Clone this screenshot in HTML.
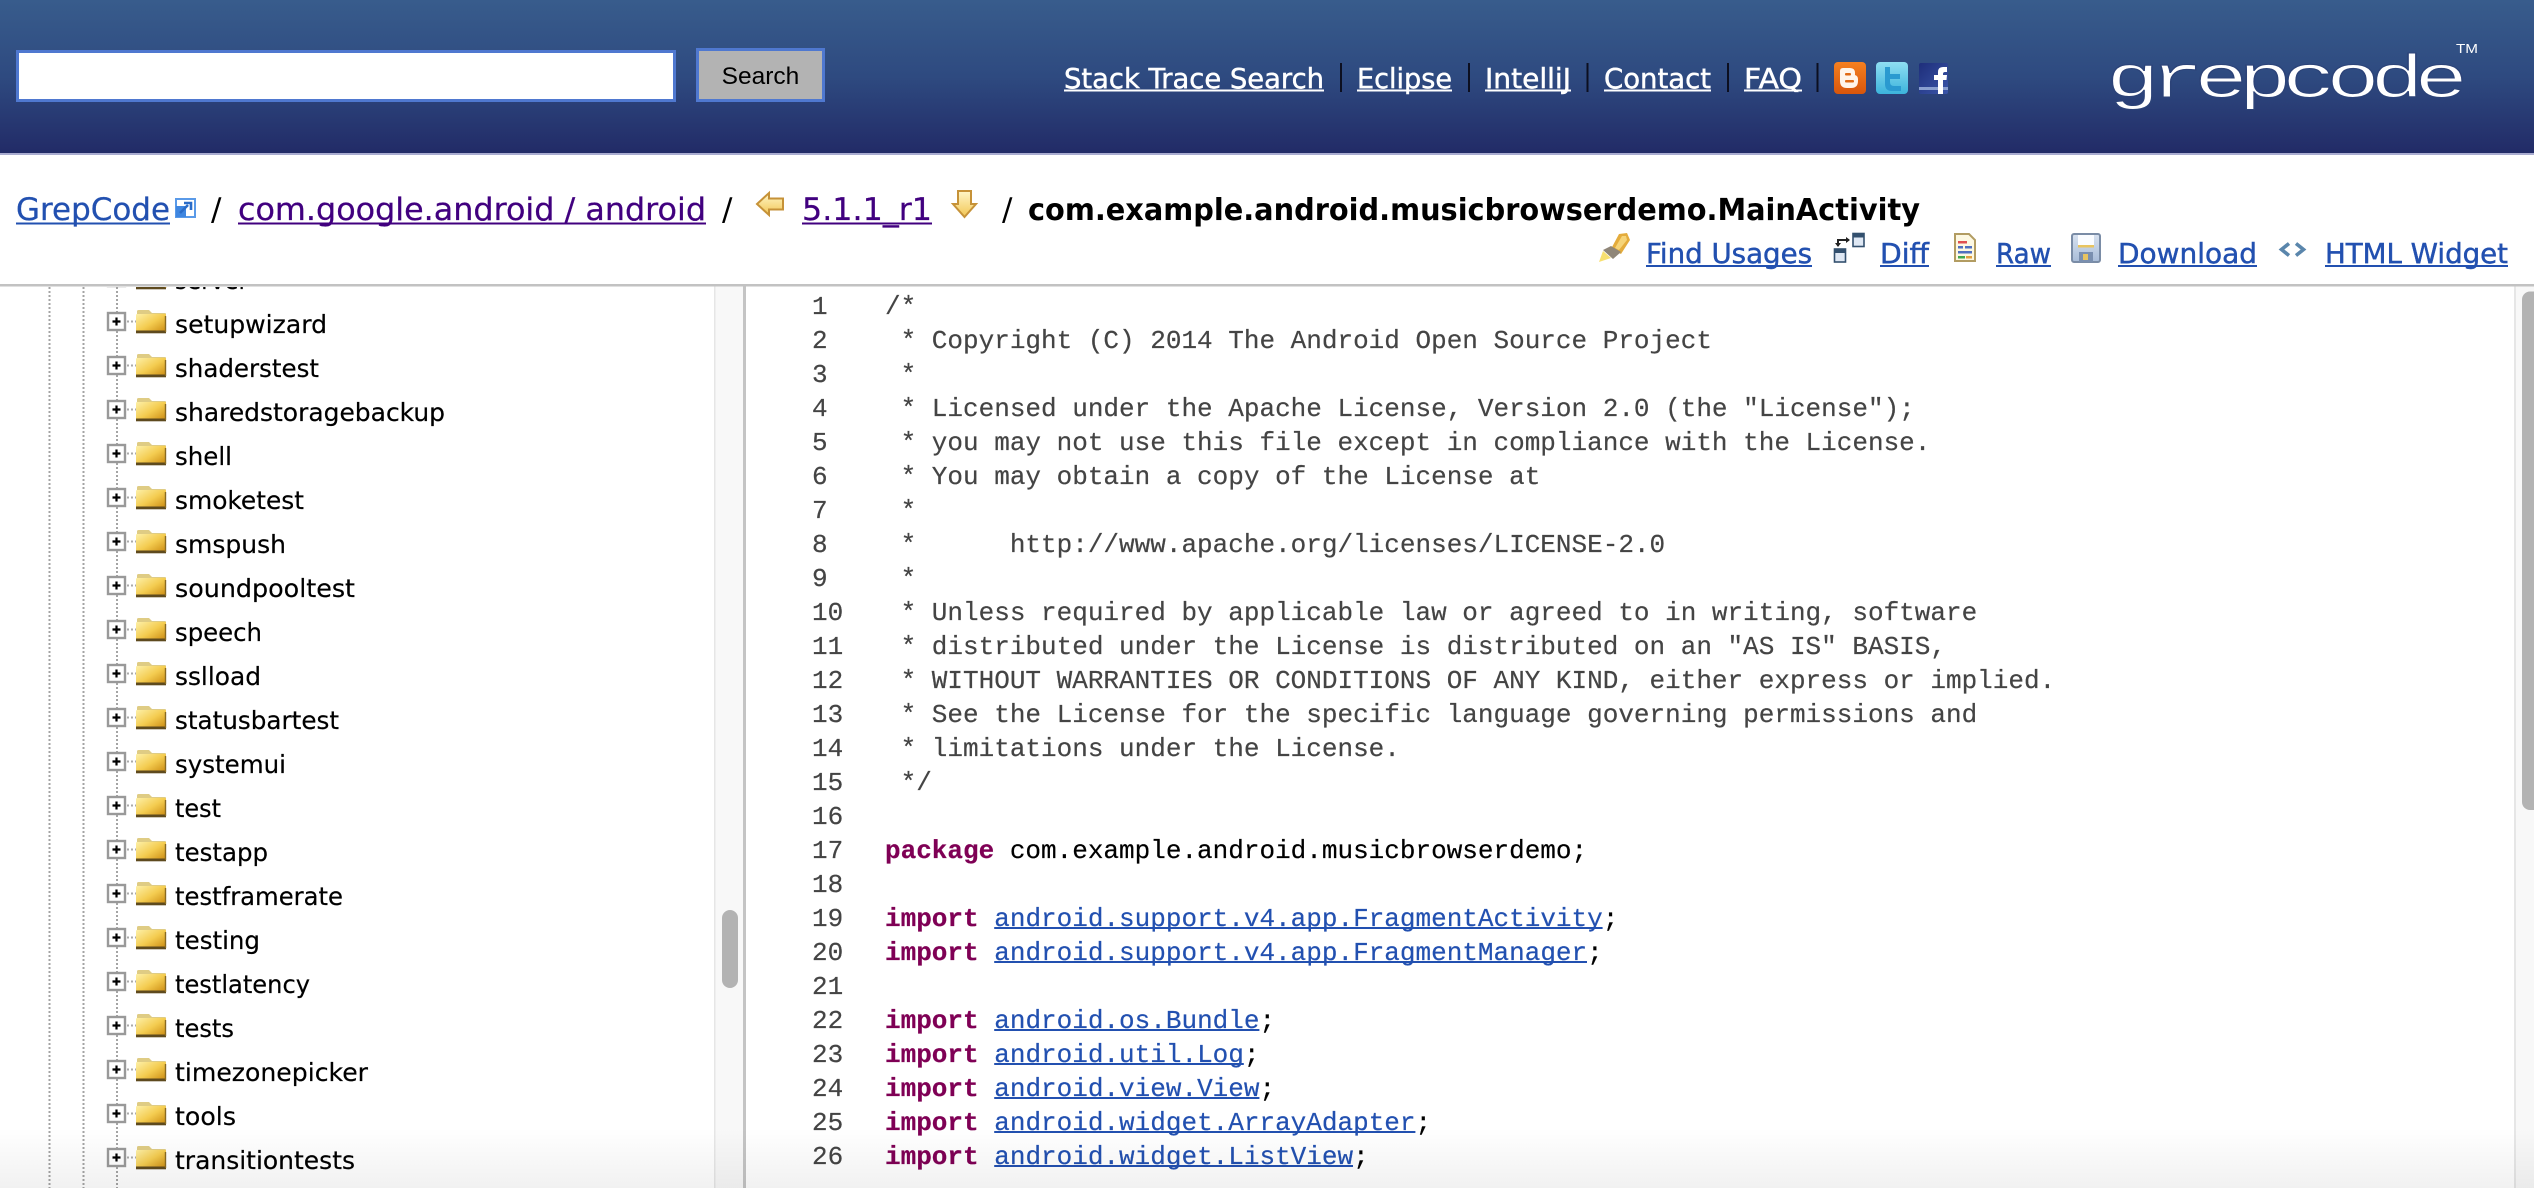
<!DOCTYPE html>
<html lang="en">
<head>
<meta charset="utf-8">
<title>com.example.android.musicbrowserdemo.MainActivity - GrepCode</title>
<style>
html,body{margin:0;padding:0;width:2534px;height:1188px;overflow:hidden;background:#fff}
#q{position:absolute;left:16px;top:50px;width:660px;height:52px;box-sizing:border-box;border:3px solid #4f78d0;background:#fff;margin:0;padding:0;outline:none}
#go{position:absolute;left:696px;top:48px;width:129px;height:54px;box-sizing:border-box;border:3px solid #4f78d0;background:#b3b3b3;color:#000;font:24.5px "Liberation Sans",sans-serif;margin:0;padding:3px 0 0}
svg{position:absolute;left:0;top:0}
.n{font:27.4px "DejaVu Sans",sans-serif}
.n text{stroke-width:.45}
.b{font:31px "DejaVu Sans",sans-serif}
.t{font:25px "DejaVu Sans",sans-serif;fill:#000;stroke:#000;stroke-width:.2}
.c{font:26px "Liberation Mono",monospace;white-space:pre;fill:#000;stroke:#000;stroke-width:.2}
.g{fill:#444;stroke:#444}
.ln{font:26px "Liberation Mono",monospace;fill:#444;stroke:#444;stroke-width:.2}
.k{font-weight:bold;fill:#7f0055;stroke:#7f0055}
.l{fill:#2250b0;stroke:#2250b0}
</style>
</head>
<body>
<svg width="2534" height="1188" viewBox="0 0 2534 1188" xmlns="http://www.w3.org/2000/svg">
<defs>
<linearGradient id="hd" x1="0" y1="0" x2="0" y2="1"><stop offset="0" stop-color="#385c8c"/><stop offset=".5" stop-color="#2e4a80"/><stop offset="1" stop-color="#222b67"/></linearGradient>
<linearGradient id="fo" x1="0" y1="0" x2="1" y2="1"><stop offset="0" stop-color="#fdf0a8"/><stop offset=".5" stop-color="#f4cc50"/><stop offset="1" stop-color="#c8860c"/></linearGradient>
<linearGradient id="ar" x1="0" y1="0" x2="0" y2="1"><stop offset="0" stop-color="#fff6c8"/><stop offset="1" stop-color="#f2c654"/></linearGradient>
<linearGradient id="bl" x1="0" y1="0" x2="0" y2="1"><stop offset="0" stop-color="#f58020"/><stop offset="1" stop-color="#d8560c"/></linearGradient>
<linearGradient id="tw" x1="0" y1="0" x2="0" y2="1"><stop offset="0" stop-color="#8fdef2"/><stop offset="1" stop-color="#3cb4dc"/></linearGradient>
<linearGradient id="fb" x1="0" y1="0" x2="1" y2="1"><stop offset="0" stop-color="#1e2e7a"/><stop offset="1" stop-color="#3a55a8"/></linearGradient>
<linearGradient id="sv" x1="0" y1="0" x2="0" y2="1"><stop offset="0" stop-color="#d8e2f0"/><stop offset="1" stop-color="#a8bcd8"/></linearGradient>
<linearGradient id="fade" x1="0" y1="0" x2="0" y2="1"><stop offset="0" stop-color="#000" stop-opacity="0"/><stop offset="1" stop-color="#000" stop-opacity=".055"/></linearGradient>
<clipPath id="tc"><rect x="0" y="287" width="714" height="901"/></clipPath>
<symbol id="ti" overflow="visible" viewBox="0 0 80 30" width="80" height="30">
<rect x="1" y="3" width="17" height="17" fill="#fff" stroke="#999" stroke-width="2.4"/>
<path d="M5.500 11.500h8M9.500 7.500v8" stroke="#000" stroke-width="2.200" fill="none"/>
<path d="M20 11.500h9" stroke="#aaa" stroke-width="2" stroke-dasharray="2 2" fill="none"/>
<path d="M30 4 V1.500 Q30 0 31.500 0 H42 L45 3 H58 Q59 3 59 4 V23 H30 Z" fill="#dfcc84"/>
<rect x="29" y="4" width="30" height="19" rx="1" fill="url(#fo)"/>
<rect x="29" y="20.500" width="30" height="2.800" fill="#5e4a1e"/>
<rect x="57.800" y="6" width="1.400" height="16" fill="#8a6a20"/>
</symbol>
</defs>

<!-- header -->
<rect x="0" y="0" width="2534" height="153" fill="url(#hd)"/>
<rect x="0" y="153" width="2534" height="2" fill="#a9acd0"/>

<!-- nav -->
<g class="n" fill="#fff" stroke="#fff">
<text x="1064" y="88" textLength="260" lengthAdjust="spacingAndGlyphs">Stack Trace Search</text><rect x="1064" y="89.500" width="260" height="2" stroke="none"/>
<text x="1357" y="88" textLength="95" lengthAdjust="spacingAndGlyphs">Eclipse</text><rect x="1357" y="89.500" width="95" height="2" stroke="none"/>
<text x="1485" y="88" textLength="86" lengthAdjust="spacingAndGlyphs">IntelliJ</text><rect x="1485" y="89.500" width="86" height="2" stroke="none"/>
<text x="1604" y="88" textLength="107" lengthAdjust="spacingAndGlyphs">Contact</text><rect x="1604" y="89.500" width="107" height="2" stroke="none"/>
<text x="1744" y="88" textLength="58" lengthAdjust="spacingAndGlyphs">FAQ</text><rect x="1744" y="89.500" width="58" height="2" stroke="none"/>
</g>
<g fill="#0c0f20">
<rect x="1340" y="63" width="2" height="29"/><rect x="1468" y="63" width="2" height="29"/><rect x="1586.500" y="63" width="2" height="29"/><rect x="1727" y="63" width="2" height="29"/><rect x="1816.500" y="63" width="2" height="29"/>
</g>
<!-- social -->
<rect x="1834" y="62" width="32" height="32" rx="4" fill="url(#bl)"/>
<path d="M1843 68h7q5 0 5 5v2q3 1 3 4v2q0 7-7 7h-4q-7 0-7-7v-10q0-3 3-3z" fill="#fff5ea"/>
<rect x="1845" y="73" width="6" height="2.500" rx="1" fill="#e06a14"/><rect x="1845" y="80" width="9" height="2.500" rx="1" fill="#e06a14"/>
<rect x="1876" y="62" width="32" height="32" rx="4" fill="url(#tw)"/>
<path d="M1885 67h5v7h10v5h-10v3q0 4 4 4h7v5h-9q-7 0-7-7z" fill="#2a9ad0"/>
<rect x="1919" y="63" width="29" height="31" rx="2" fill="url(#fb)"/>
<rect x="1919" y="87" width="29" height="3" fill="#8a9fd0"/>
<path d="M1938 94V80h-4v-5h4v-3q0-5 5-5h4v5h-2q-2 0-2 2v1h4l-.5 5H1943v14z" fill="#fff"/>

<!-- logo -->
<g transform="translate(2106,97) scale(1.22,.82)">
<text x="0" y="0" font-family="Liberation Mono, monospace" font-size="73.500" letter-spacing="-8" fill="#fff" stroke="#2c4378" stroke-width="1.300">grepcode</text>
</g>
<text x="2456" y="53" font-family="Liberation Sans, sans-serif" font-size="12.500" fill="#fff" textLength="22" lengthAdjust="spacingAndGlyphs">TM</text>

<!-- breadcrumb -->
<g class="b">
<text x="16" y="220" fill="#2250b0" stroke="#2250b0" stroke-width=".25" textLength="154" lengthAdjust="spacingAndGlyphs">GrepCode</text><rect x="16" y="222.500" width="154" height="2" fill="#2250b0"/>
<text x="211" y="220" fill="#000">/</text>
<text x="238" y="220" fill="#41007f" stroke="#41007f" stroke-width=".25" textLength="468" lengthAdjust="spacingAndGlyphs">com.google.android / android</text><rect x="238" y="222.500" width="468" height="2" fill="#41007f"/>
<text x="722" y="220" fill="#000">/</text>
<text x="802" y="220" fill="#41007f" stroke="#41007f" stroke-width=".25" textLength="130" lengthAdjust="spacingAndGlyphs">5.1.1_r1</text><rect x="802" y="222.500" width="130" height="2" fill="#41007f"/>
<text x="1002" y="220" fill="#000">/</text>
<text x="1028" y="220" fill="#000" font-weight="bold" font-size="30" textLength="892" lengthAdjust="spacingAndGlyphs">com.example.android.musicbrowserdemo.MainActivity</text>
</g>
<!-- external icon -->
<rect x="176" y="199" width="19" height="18" fill="#fff" stroke="#5a9ae8" stroke-width="2"/>
<rect x="176" y="206" width="10" height="11" fill="#3f86e0"/>
<path d="M180 213l8-8M184 203h7v7" stroke="#2a6cc8" stroke-width="2.600" fill="none"/>
<!-- arrows -->
<path d="M757 204L769 193V198.500H783V209.500H769V215Z" fill="url(#ar)" stroke="#c69238" stroke-width="2"/>
<path d="M958 191H971V204H976L964.500 217L953 204H958Z" fill="url(#ar)" stroke="#c69238" stroke-width="2"/>

<!-- toolbar -->
<g class="n" fill="#2250b0" stroke="#2250b0">
<text x="1646" y="263" textLength="166" lengthAdjust="spacingAndGlyphs">Find Usages</text><rect x="1646" y="265" width="166" height="2" stroke="none"/>
<text x="1880" y="263" textLength="49" lengthAdjust="spacingAndGlyphs">Diff</text><rect x="1880" y="265" width="49" height="2" stroke="none"/>
<text x="1996" y="263" textLength="55" lengthAdjust="spacingAndGlyphs">Raw</text><rect x="1996" y="265" width="55" height="2" stroke="none"/>
<text x="2118" y="263" textLength="139" lengthAdjust="spacingAndGlyphs">Download</text><rect x="2118" y="265" width="139" height="2" stroke="none"/>
<text x="2325" y="263" textLength="183" lengthAdjust="spacingAndGlyphs">HTML Widget</text><rect x="2325" y="265" width="183" height="2" stroke="none"/>
</g>
<!-- find usages icon -->
<path d="M1619 234L1627 233L1630 240L1621 254L1611 249Z" fill="#e4ac3c"/>
<path d="M1622 236L1626 236L1627 240L1619 250L1615 248Z" fill="#f6d478"/>
<path d="M1603 250L1611 246L1621 252L1613 259Z" fill="#8f8678"/>
<path d="M1603 251L1611 258L1599 262Z" fill="#f8e070"/>
<!-- diff icon -->
<rect x="1853" y="233.500" width="11" height="13" fill="#dfe8f4" stroke="#33506e" stroke-width="1.600"/><rect x="1853" y="233.500" width="11" height="4" fill="#33506e"/>
<rect x="1834.500" y="249" width="11" height="13" fill="#dfe8f4" stroke="#33506e" stroke-width="1.600"/><rect x="1834.500" y="249" width="11" height="4" fill="#33506e"/>
<path d="M1838 246V240H1849" stroke="#222" stroke-width="2" fill="none"/><path d="M1835 243h6l-3 4zM1846 237l4 3-4 3z" fill="#222"/>
<!-- raw icon -->
<path d="M1955 234H1969L1975 240V261H1955Z" fill="#fdf8e2" stroke="#b29c62" stroke-width="2"/>
<rect x="1958" y="241" width="9" height="2.500" fill="#e05050"/><rect x="1958" y="246" width="5" height="2.500" fill="#5070c0"/><rect x="1965" y="246" width="7" height="2.500" fill="#5070c0"/><rect x="1958" y="251" width="14" height="2.500" fill="#5070c0"/><rect x="1958" y="256" width="7" height="2.500" fill="#40a850"/><rect x="1966" y="256" width="6" height="2.500" fill="#e0a040"/>
<!-- save icon -->
<rect x="2072" y="234" width="28" height="28" rx="2" fill="url(#sv)" stroke="#7a8ca6" stroke-width="2"/>
<rect x="2078" y="235" width="16" height="12" fill="#fafcff"/><rect x="2078" y="245" width="16" height="2.500" fill="#e8c460"/>
<rect x="2079" y="252" width="14" height="10" fill="#7a8faf"/><rect x="2083" y="254" width="5" height="6" fill="#e8c460"/>
<!-- html icon -->
<path d="M2289 243.500L2281.500 249.500L2289 255.500M2296 243.500L2303.500 249.500L2296 255.500" stroke="#5a86ac" stroke-width="3.600" fill="none"/>

<!-- separators -->
<rect x="0" y="284" width="2534" height="2.500" fill="#c2c2c2"/>

<!-- left tree -->
<g clip-path="url(#tc)">
<g stroke="#a4a4a4" stroke-width="2" stroke-dasharray="2 2" fill="none">
<path d="M49.500 287V1188M83.500 287V1188M117 287V1188"/>
</g>
<g>
<use href="#ti" x="107" y="266"/><use href="#ti" x="107" y="310"/><use href="#ti" x="107" y="354"/><use href="#ti" x="107" y="398"/><use href="#ti" x="107" y="442"/><use href="#ti" x="107" y="486"/><use href="#ti" x="107" y="530"/><use href="#ti" x="107" y="574"/><use href="#ti" x="107" y="618"/><use href="#ti" x="107" y="662"/><use href="#ti" x="107" y="706"/><use href="#ti" x="107" y="750"/><use href="#ti" x="107" y="794"/><use href="#ti" x="107" y="838"/><use href="#ti" x="107" y="882"/><use href="#ti" x="107" y="926"/><use href="#ti" x="107" y="970"/><use href="#ti" x="107" y="1014"/><use href="#ti" x="107" y="1058"/><use href="#ti" x="107" y="1102"/><use href="#ti" x="107" y="1146"/>
</g>
<g class="t">
<text x="175" y="289" textLength="73" lengthAdjust="spacingAndGlyphs">server</text>
<text x="175" y="333" textLength="152" lengthAdjust="spacingAndGlyphs">setupwizard</text>
<text x="175" y="377" textLength="144" lengthAdjust="spacingAndGlyphs">shaderstest</text>
<text x="175" y="421" textLength="270" lengthAdjust="spacingAndGlyphs">sharedstoragebackup</text>
<text x="175" y="465" textLength="57" lengthAdjust="spacingAndGlyphs">shell</text>
<text x="175" y="509" textLength="129" lengthAdjust="spacingAndGlyphs">smoketest</text>
<text x="175" y="553" textLength="111" lengthAdjust="spacingAndGlyphs">smspush</text>
<text x="175" y="597" textLength="180" lengthAdjust="spacingAndGlyphs">soundpooltest</text>
<text x="175" y="641" textLength="87" lengthAdjust="spacingAndGlyphs">speech</text>
<text x="175" y="685" textLength="86" lengthAdjust="spacingAndGlyphs">sslload</text>
<text x="175" y="729" textLength="164" lengthAdjust="spacingAndGlyphs">statusbartest</text>
<text x="175" y="773" textLength="111" lengthAdjust="spacingAndGlyphs">systemui</text>
<text x="175" y="817" textLength="46" lengthAdjust="spacingAndGlyphs">test</text>
<text x="175" y="861" textLength="93" lengthAdjust="spacingAndGlyphs">testapp</text>
<text x="175" y="905" textLength="168" lengthAdjust="spacingAndGlyphs">testframerate</text>
<text x="175" y="949" textLength="85" lengthAdjust="spacingAndGlyphs">testing</text>
<text x="175" y="993" textLength="135" lengthAdjust="spacingAndGlyphs">testlatency</text>
<text x="175" y="1037" textLength="59" lengthAdjust="spacingAndGlyphs">tests</text>
<text x="175" y="1081" textLength="193" lengthAdjust="spacingAndGlyphs">timezonepicker</text>
<text x="175" y="1125" textLength="61" lengthAdjust="spacingAndGlyphs">tools</text>
<text x="175" y="1169" textLength="180" lengthAdjust="spacingAndGlyphs">transitiontests</text>
</g>
</g>

<!-- left scrollbar -->
<rect x="714" y="286.500" width="29" height="902" fill="#f8f8f8"/>
<rect x="714" y="286.500" width="1.500" height="902" fill="#e6e6e6"/>
<rect x="743" y="286.500" width="3" height="902" fill="#c4c4c4"/>
<rect x="722" y="910" width="16" height="78" rx="8" fill="#b3b3b3"/>

<!-- right scrollbar -->
<rect x="2514" y="286.500" width="20" height="902" fill="#f8f8f8"/>
<rect x="2514" y="286.500" width="2" height="902" fill="#e6e6e6"/>
<rect x="2522" y="291.500" width="20" height="518.500" rx="8" fill="#b3b3b3"/>

<!-- line numbers -->
<g class="ln">
<text x="812" y="314">1</text><text x="812" y="348">2</text><text x="812" y="382">3</text><text x="812" y="416">4</text><text x="812" y="450">5</text><text x="812" y="484">6</text><text x="812" y="518">7</text><text x="812" y="552">8</text><text x="812" y="586">9</text><text x="812" y="620">10</text><text x="812" y="654">11</text><text x="812" y="688">12</text><text x="812" y="722">13</text><text x="812" y="756">14</text><text x="812" y="790">15</text><text x="812" y="824">16</text><text x="812" y="858">17</text><text x="812" y="892">18</text><text x="812" y="926">19</text><text x="812" y="960">20</text><text x="812" y="994">21</text><text x="812" y="1028">22</text><text x="812" y="1062">23</text><text x="812" y="1096">24</text><text x="812" y="1130">25</text><text x="812" y="1164">26</text>
</g>

<!-- code -->
<g class="c" xml:space="preserve">
<text class="c g" x="885" y="314">/*</text>
<text class="c g" x="885" y="348"> * Copyright (C) 2014 The Android Open Source Project</text>
<text class="c g" x="885" y="382"> *</text>
<text class="c g" x="885" y="416"> * Licensed under the Apache License, Version 2.0 (the "License");</text>
<text class="c g" x="885" y="450"> * you may not use this file except in compliance with the License.</text>
<text class="c g" x="885" y="484"> * You may obtain a copy of the License at</text>
<text class="c g" x="885" y="518"> *</text>
<text class="c g" x="885" y="552"> *      http://www.apache.org/licenses/LICENSE-2.0</text>
<text class="c g" x="885" y="586"> *</text>
<text class="c g" x="885" y="620"> * Unless required by applicable law or agreed to in writing, software</text>
<text class="c g" x="885" y="654"> * distributed under the License is distributed on an "AS IS" BASIS,</text>
<text class="c g" x="885" y="688"> * WITHOUT WARRANTIES OR CONDITIONS OF ANY KIND, either express or implied.</text>
<text class="c g" x="885" y="722"> * See the License for the specific language governing permissions and</text>
<text class="c g" x="885" y="756"> * limitations under the License.</text>
<text class="c g" x="885" y="790"> */</text>
<text class="c" x="885" y="858"><tspan class="k">package</tspan> com.example.android.musicbrowserdemo;</text>
<text class="c" x="885" y="926"><tspan class="k">import</tspan> <tspan class="l">android.support.v4.app.FragmentActivity</tspan>;</text>
<text class="c" x="885" y="960"><tspan class="k">import</tspan> <tspan class="l">android.support.v4.app.FragmentManager</tspan>;</text>
<text class="c" x="885" y="1028"><tspan class="k">import</tspan> <tspan class="l">android.os.Bundle</tspan>;</text>
<text class="c" x="885" y="1062"><tspan class="k">import</tspan> <tspan class="l">android.util.Log</tspan>;</text>
<text class="c" x="885" y="1096"><tspan class="k">import</tspan> <tspan class="l">android.view.View</tspan>;</text>
<text class="c" x="885" y="1130"><tspan class="k">import</tspan> <tspan class="l">android.widget.ArrayAdapter</tspan>;</text>
<text class="c" x="885" y="1164"><tspan class="k">import</tspan> <tspan class="l">android.widget.ListView</tspan>;</text>
</g>
<g fill="#2250b0">
<rect x="994.200" y="927" width="608.400" height="2"/>
<rect x="994.200" y="961" width="592.800" height="2"/>
<rect x="994.200" y="1029" width="265.200" height="2"/>
<rect x="994.200" y="1063" width="249.600" height="2"/>
<rect x="994.200" y="1097" width="265.200" height="2"/>
<rect x="994.200" y="1131" width="421.200" height="2"/>
<rect x="994.200" y="1165" width="358.800" height="2"/>
</g>

<!-- bottom fade -->
<rect x="0" y="1128" width="2534" height="60" fill="url(#fade)"/>
</svg>
<input id="q" type="text" aria-label="Search">
<button id="go" type="button">Search</button>
</body>
</html>
